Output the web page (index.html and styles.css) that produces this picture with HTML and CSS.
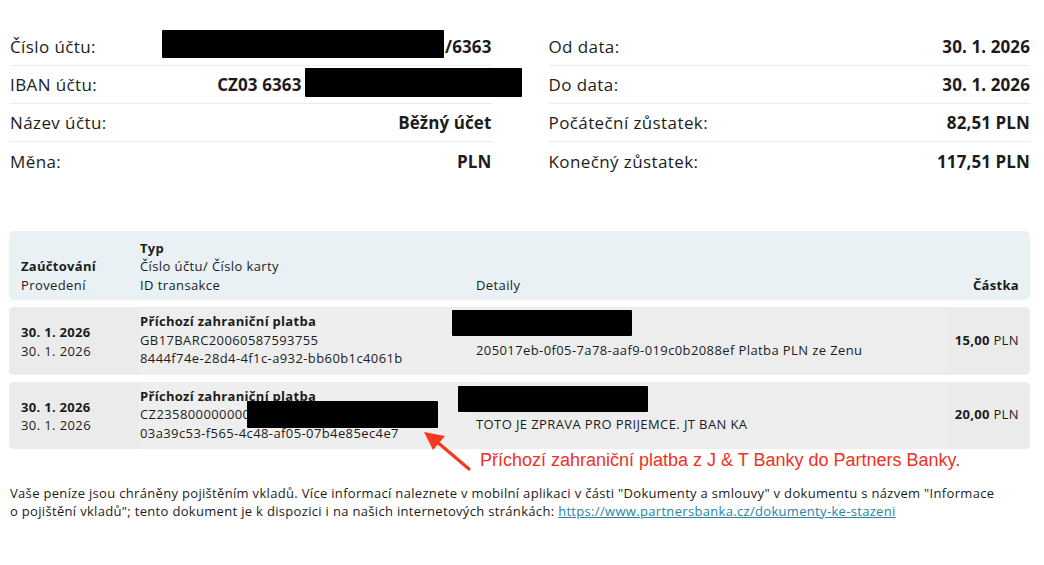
FILE: index.html
```html
<!DOCTYPE html>
<html lang="cs">
<head>
<meta charset="utf-8">
<title>Výpis z účtu</title>
<link rel="stylesheet" href="styles.css">
</head>
<body>
<div class="page">
  <section class="summary">
    <div class="col">
      <div class="row"><span class="label">Číslo účtu:</span><span class="value"><span class="redact r-acc"></span>/6363</span></div>
      <div class="row"><span class="label">IBAN účtu:</span><span class="value">CZ03 6363<span class="redact r-iban"></span></span></div>
      <div class="row"><span class="label">Název účtu:</span><span class="value">Běžný účet</span></div>
      <div class="row"><span class="label">Měna:</span><span class="value">PLN</span></div>
    </div>
    <div class="col">
      <div class="row"><span class="label">Od data:</span><span class="value">30. 1. 2026</span></div>
      <div class="row"><span class="label">Do data:</span><span class="value">30. 1. 2026</span></div>
      <div class="row"><span class="label">Počáteční zůstatek:</span><span class="value">82,51 PLN</span></div>
      <div class="row"><span class="label">Konečný zůstatek:</span><span class="value">117,51 PLN</span></div>
    </div>
  </section>

  <section class="tx">
    <div class="tx-row tx-head">
      <div class="c c1"><b>Zaúčtování</b><span>Provedení</span></div>
      <div class="c c2"><b>Typ</b><span>Číslo účtu/ Číslo karty</span><span>ID transakce</span></div>
      <div class="c c3"><span>Detaily</span></div>
      <div class="c c4"><b>Částka</b></div>
    </div>
    <div class="tx-row tx-item">
      <div class="c c1"><b>30. 1. 2026</b><span>30. 1. 2026</span></div>
      <div class="c c2"><b>Příchozí zahraniční platba</b><span>GB17BARC20060587593755</span><span>8444f74e-28d4-4f1c-a932-bb60b1c4061b</span></div>
      <div class="c c3 d1"><span class="redact r-det1"></span><span class="msg">205017eb-0f05-7a78-aaf9-019c0b2088ef Platba PLN ze Zenu</span></div>
      <div class="c c4"><span><b>15,00</b> PLN</span></div>
    </div>
    <div class="tx-row tx-item">
      <div class="c c1"><b>30. 1. 2026</b><span>30. 1. 2026</span></div>
      <div class="c c2 rel"><b>Příchozí zahraniční platba</b><span>CZ2358000000000</span><span>03a39c53-f565-4c48-af05-07b4e85ec4e7</span><span class="redact r-id2"></span></div>
      <div class="c c3 d2"><span class="redact r-det2"></span><span class="msg">TOTO JE ZPRAVA PRO PRIJEMCE. JT BAN KA</span></div>
      <div class="c c4"><span><b>20,00</b> PLN</span></div>
    </div>
  </section>

  <div class="note">Příchozí zahraniční platba z J &amp; T Banky do Partners Banky.</div>

  <p class="footer">Vaše peníze jsou chráněny pojištěním vkladů. Více informací naleznete v mobilní aplikaci v části "Dokumenty a smlouvy" v dokumentu s názvem "Informace<br>o pojištění vkladů"; tento dokument je k dispozici i na našich internetových stránkách: <a href="#">https://www.partnersbanka.cz/dokumenty-ke-stazeni</a></p>

  <svg class="arrow" width="60" height="50" viewBox="418 426 60 50" aria-hidden="true">
    <line x1="469" y1="469" x2="436" y2="441" stroke="#f5381f" stroke-width="3.2" stroke-linecap="round"/>
    <polygon points="424,432 445,436 433,450" fill="#f5381f"/>
  </svg>
</div>
</body>
</html>
```

FILE: styles.css
```css
* { box-sizing: border-box; }

body {
  margin: 0;
  background: #ffffff;
  color: #1c1c1c;
  font-family: "Open Sans", "DejaVu Sans", sans-serif;
}

.page {
  position: relative;
  padding: 28px 14px 0 9px;
}

/* summary */
.summary {
  display: grid;
  grid-template-columns: 1fr 1fr;
  column-gap: 57px;
  padding-left: 1px;
}

.row {
  display: flex;
  justify-content: space-between;
  align-items: center;
  height: 38px;
  border-bottom: 1px solid #ececec;
  font-size: 17px;
  letter-spacing: 0.4px;
}

.row:last-child { border-bottom: none; }

.label { font-weight: 400; }

.value {
  display: flex;
  align-items: center;
  font-weight: 700;
  letter-spacing: 0.1px;
}

.redact {
  display: block;
  flex: none;
  position: relative;
  z-index: 2;
  background: #000;
  border-radius: 1px;
}

.r-acc {
  width: 282px;
  height: 28px;
  margin: 0 1px 6px 0;
}

.r-iban {
  width: 217px;
  height: 29px;
  margin: 0 -30px 5px 3px;
}

/* transactions */
.tx {
  margin-top: 51px;
  display: flex;
  flex-direction: column;
  gap: 7px;
}

.tx-row {
  display: grid;
  grid-template-columns: 130px 336px 470px 85px;
  border-radius: 5px;
  overflow: hidden;
  font-size: 13px;
  line-height: 18.5px;
  letter-spacing: 0.4px;
}

.c {
  display: flex;
  flex-direction: column;
  align-items: flex-start;
}

.c b { font-weight: 700; letter-spacing: 0.3px; }

.c1 { padding-left: 12px; }
.c2 { padding-left: 1px; }
.c3 { padding-left: 1px; }
.c4 { padding-right: 11px; align-items: flex-end; }

.tx-head {
  background: #e9f1f4;
  height: 69px;
}

.tx-head .c {
  justify-content: flex-end;
  padding-bottom: 6px;
}

.tx-item { background: #ececec; }
.tx-item .c1 { background: #ebebeb; justify-content: center; padding-top: 2px; }
.tx-item .c2 { background: #eeeeee; padding-top: 5px; padding-bottom: 7px; }
.tx-item .c3 { background: #ededed; }
.tx-item .c4 { background: #ebebeb; justify-content: center; padding-bottom: 2px; }

.rel { position: relative; }

.r-id2 {
  position: absolute;
  left: 108px;
  top: 19px;
  width: 191px;
  height: 27px;
}

.d1 { padding-top: 3px; }
.d2 { padding-top: 4px; }

.r-det1 {
  width: 180px;
  height: 26px;
  margin-left: -24px;
}

.r-det2 {
  width: 190px;
  height: 26px;
  margin-left: -18px;
}

.d1 .msg { margin-top: 5px; }
.d2 .msg { margin-top: 3px; }

/* annotation */
.note {
  padding-left: 471px;
  font-family: "Liberation Sans", Arial, sans-serif;
  font-size: 18px;
  line-height: 22px;
  color: #f3301d;
}

.footer {
  margin: 13px 0 0 1px;
  font-size: 13px;
  line-height: 18px;
  letter-spacing: 0.32px;
  color: #1c1c1c;
}

.footer a {
  color: #2a83a0;
  text-decoration: underline;
}

.arrow {
  position: absolute;
  left: 418px;
  top: 426px;
}
```
